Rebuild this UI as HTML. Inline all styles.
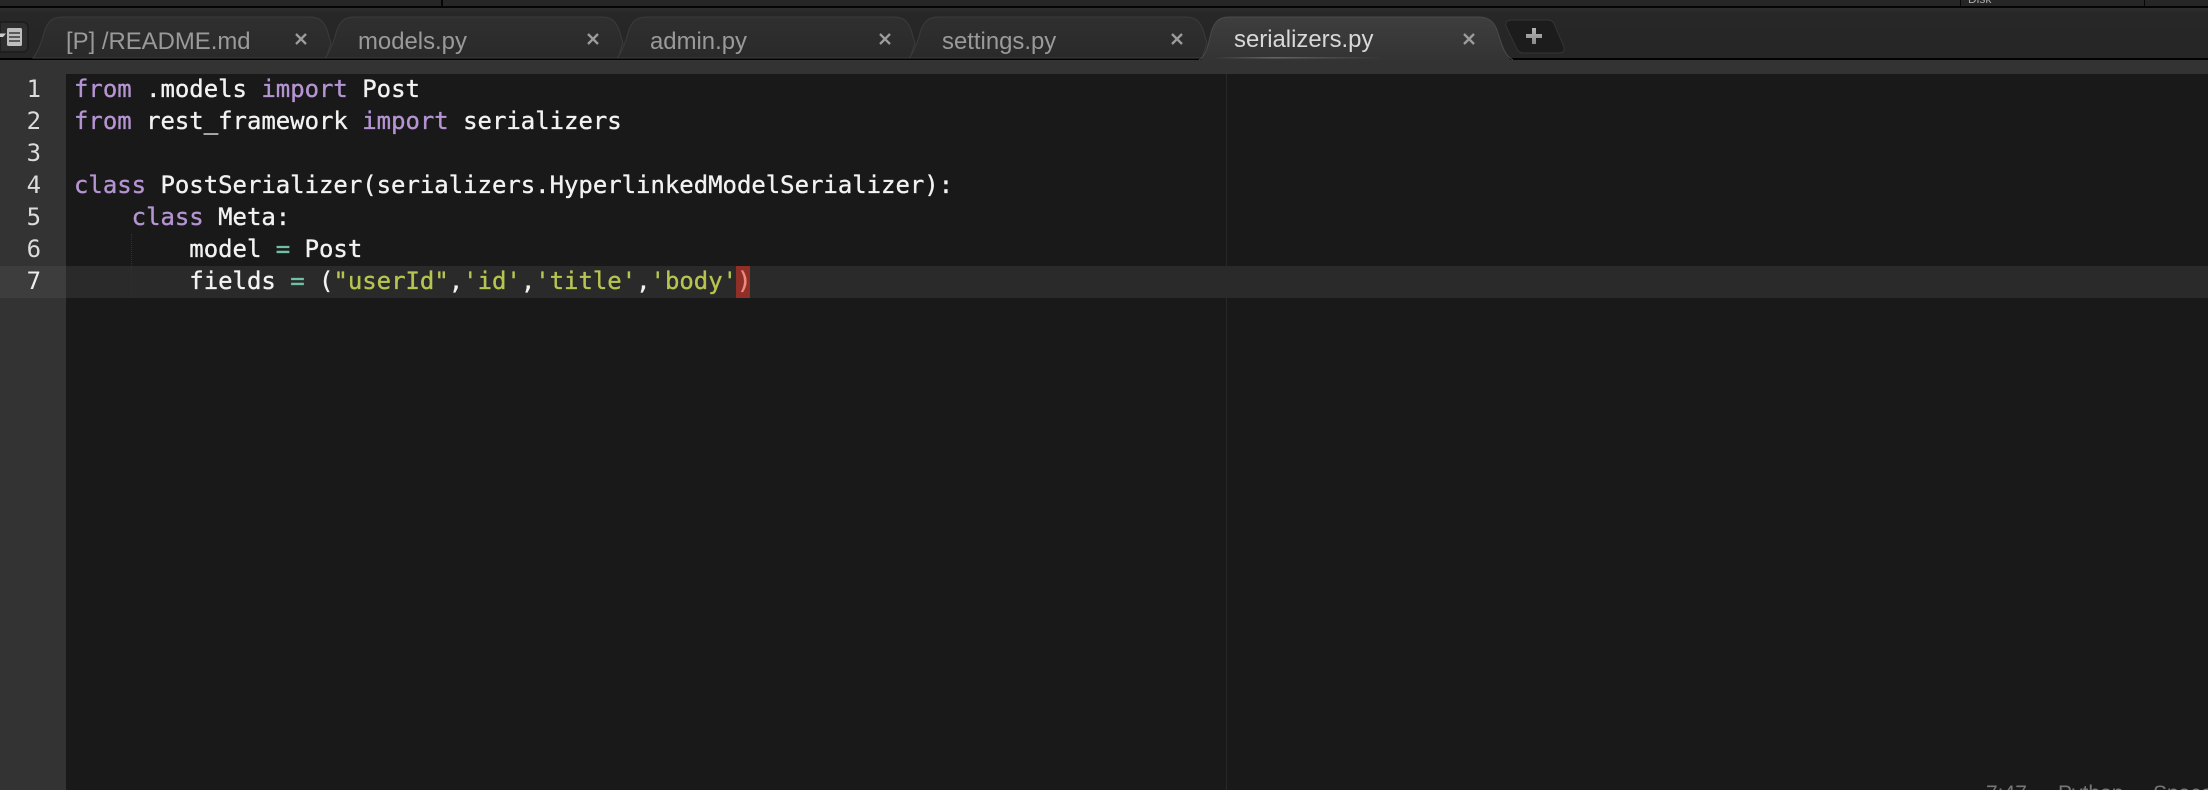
<!DOCTYPE html>
<html>
<head>
<meta charset="utf-8">
<style>
html,body{margin:0;padding:0;background:#191919;}
#r{position:relative;width:2208px;height:790px;overflow:hidden;background:#191919;}
.a{position:absolute;}
.t{position:absolute;top:25px;font:23.9px/34px "Liberation Sans",sans-serif;color:#9a9a9a;white-space:pre;}
.l{position:absolute;left:74px;height:32px;font:23.95px/32px "DejaVu Sans Mono","Liberation Mono",monospace;color:#f2f2f2;white-space:pre;-webkit-text-stroke:.35px currentColor;}
.n{position:absolute;left:0;width:41px;text-align:right;height:32px;font:23.95px/32px "DejaVu Sans Mono","Liberation Mono",monospace;color:#dcdcdc;}
.k{color:#b494d2}.s{color:#b7c450}.o{color:#6fc0a6}
</style>
</head>
<body>
<div id="r">
<div class="a" style="left:0;top:0;width:2208px;height:6px;background:#262626"></div>
<div class="a" style="left:0;top:6px;width:2208px;height:2px;background:#050505"></div>
<div class="a" style="left:441px;top:0;width:2px;height:6px;background:#060606"></div>
<div class="a" style="left:1960px;top:0;width:1px;height:6px;background:#060606"></div>
<div class="a" style="left:2144px;top:0;width:1px;height:6px;background:#060606"></div>
<div class="a" style="left:1968px;top:-7px;font:12px/12px 'Liberation Sans',sans-serif;color:#aaa">Disk</div>
<div class="a" style="left:0;top:8px;width:2208px;height:50px;background:linear-gradient(#2e2e2e,#272727 10%,#262626)"></div>
<div class="a" style="left:0;top:58px;width:2208px;height:2px;background:#030303"></div>
<div class="a" style="left:0;top:60px;width:2208px;height:14px;background:#333"></div>
<div class="a" style="left:0;top:74px;width:66px;height:716px;background:#333"></div>
<div class="a" style="left:66px;top:74px;width:2142px;height:716px;background:#191919;border-top-left-radius:6px"></div>
<div class="a" style="left:1226px;top:74px;width:1px;height:716px;background:#272727"></div>

<svg class="a" style="left:0;top:0" width="2208" height="80" viewBox="0 0 2208 80">
<defs>
<linearGradient id="g1" x1="0" y1="0" x2="0" y2="1"><stop offset="0" stop-color="#2f2f2f"/><stop offset="1" stop-color="#2a2a2a"/></linearGradient>
<linearGradient id="g2" x1="0" y1="0" x2="0" y2="1"><stop offset="0" stop-color="#3e3e3e"/><stop offset="1" stop-color="#333"/></linearGradient>
<linearGradient id="g3" x1="0" y1="0" x2="1" y2="0"><stop offset="0" stop-color="#666" stop-opacity="0"/><stop offset=".35" stop-color="#666"/><stop offset="1" stop-color="#666" stop-opacity="0"/></linearGradient>
<linearGradient id="g4" x1="0" y1="0" x2="0" y2="1"><stop offset="0" stop-color="#b5b5b5"/><stop offset="1" stop-color="#8a8a8a"/></linearGradient>
</defs>
<!-- sidebar button -->
<path d="M0 22H22Q28 22 28 28V46Q28 52 22 52H0Z" fill="#2e2e2e" stroke="#1c1c1c" stroke-width="1.5"/>
<rect x="7" y="28" width="15" height="18" rx="1.5" fill="#bdbdbd"/>
<path d="M9 33H20M9 37H20M9 41H20" stroke="#3a3a3a" stroke-width="1.4"/>
<path d="M0 33.5H6L3 37H0Z" fill="#ccc"/>
<!-- inactive tabs -->
<g fill="url(#g1)" stroke="#3b3b3b" stroke-width="1">
<path d="M33 58C38 52 41 44 44 33C47 22 52 17 62 17H310C320 17 325 22 328 33C329 37 330 40 331 43L326 58Z"/>
<path d="M325 58C330 52 333 44 336 33C339 22 344 17 354 17H602C612 17 617 22 620 33C621 37 622 40 623 43L618 58Z"/>
<path d="M617 58C622 52 625 44 628 33C631 22 636 17 646 17H894C904 17 909 22 912 33C913 37 914 40 915 43L910 58Z"/>
<path d="M909 58C914 52 917 44 920 33C923 22 928 17 938 17H1186C1196 17 1201 22 1204 33C1205 37 1206 40 1207 43L1202 58Z"/>
</g>
<!-- active tab -->
<path d="M1199 62C1206 56 1208 46 1211 33C1214 22 1219 17 1229 17H1479C1489 17 1495 22 1498 33C1502 46 1505 56 1513 62Z" fill="url(#g2)"/>
<path d="M1199 60C1206 56 1208 46 1211 33C1214 22 1219 17 1229 17H1479C1489 17 1495 22 1498 33C1502 46 1505 56 1513 60" fill="none" stroke="#4a4a4a" stroke-width="1"/>
<rect x="1213" y="57" width="170" height="1.5" fill="url(#g3)"/>
<!-- plus -->
<path d="M1512 20H1548Q1553 20 1555 26L1564 47Q1565 53 1559 53H1524Q1518 53 1516 47L1506 26Q1505 20 1512 20Z" fill="#1c1c1c" stroke="#343434" stroke-width="1"/>
<path d="M1532 28H1536V34H1542V38H1536V44H1532V38H1526V34H1532Z" fill="url(#g4)"/>
<!-- close glyphs -->
<g stroke="#9c9c9c" stroke-width="2.3">
<path d="M296 34L306 44M306 34L296 44"/>
<path d="M588 34L598 44M598 34L588 44"/>
<path d="M880 34L890 44M890 34L880 44"/>
<path d="M1172 34L1182 44M1182 34L1172 44"/>
<path d="M1464 34L1474 44M1474 34L1464 44"/>
</g>
</svg>

<div class="t" style="left:66px">[P] /README.md</div>
<div class="t" style="left:358px">models.py</div>
<div class="t" style="left:650px">admin.py</div>
<div class="t" style="left:942px">settings.py</div>
<div class="t" style="left:1234px;top:23px;color:#d8d8d8">serializers.py</div>

<div class="a" style="left:0;top:266px;width:66px;height:32px;background:#3d3d3d"></div>
<div class="a" style="left:66px;top:266px;width:2142px;height:32px;background:#2a2a2a"></div>
<div class="a" style="left:131px;top:234px;width:0;height:64px;border-left:1px dotted #303030"></div>
<div class="a" style="left:736px;top:266px;width:14px;height:32px;background:#8f2f28"></div>

<div class="n" style="top:73px">1</div>
<div class="n" style="top:105px">2</div>
<div class="n" style="top:137px">3</div>
<div class="n" style="top:169px">4</div>
<div class="n" style="top:201px">5</div>
<div class="n" style="top:233px">6</div>
<div class="n" style="top:265px;color:#eee">7</div>

<div class="l" style="top:73px"><span class="k">from</span> .models <span class="k">import</span> Post</div>
<div class="l" style="top:105px"><span class="k">from</span> rest_framework <span class="k">import</span> serializers</div>
<div class="l" style="top:169px"><span class="k">class</span> PostSerializer(serializers.HyperlinkedModelSerializer):</div>
<div class="l" style="top:201px">    <span class="k">class</span> Meta:</div>
<div class="l" style="top:233px">        model <span class="o">=</span> Post</div>
<div class="l" style="top:265px">        fields <span class="o">=</span> (<span class="s">"userId"</span>,<span class="s">'id'</span>,<span class="s">'title'</span>,<span class="s">'body'</span><span style="color:#f08a80">)</span></div>

<div class="a" style="left:1986px;top:782px;font:21px/24px 'Liberation Sans',sans-serif;color:#777;white-space:pre">7:47</div>
<div class="a" style="left:2058px;top:782px;font:21px/24px 'Liberation Sans',sans-serif;color:#777;white-space:pre">Python</div>
<div class="a" style="left:2153px;top:782px;font:21px/24px 'Liberation Sans',sans-serif;color:#777;white-space:pre">Spaces</div>
</div>
</body>
</html>
